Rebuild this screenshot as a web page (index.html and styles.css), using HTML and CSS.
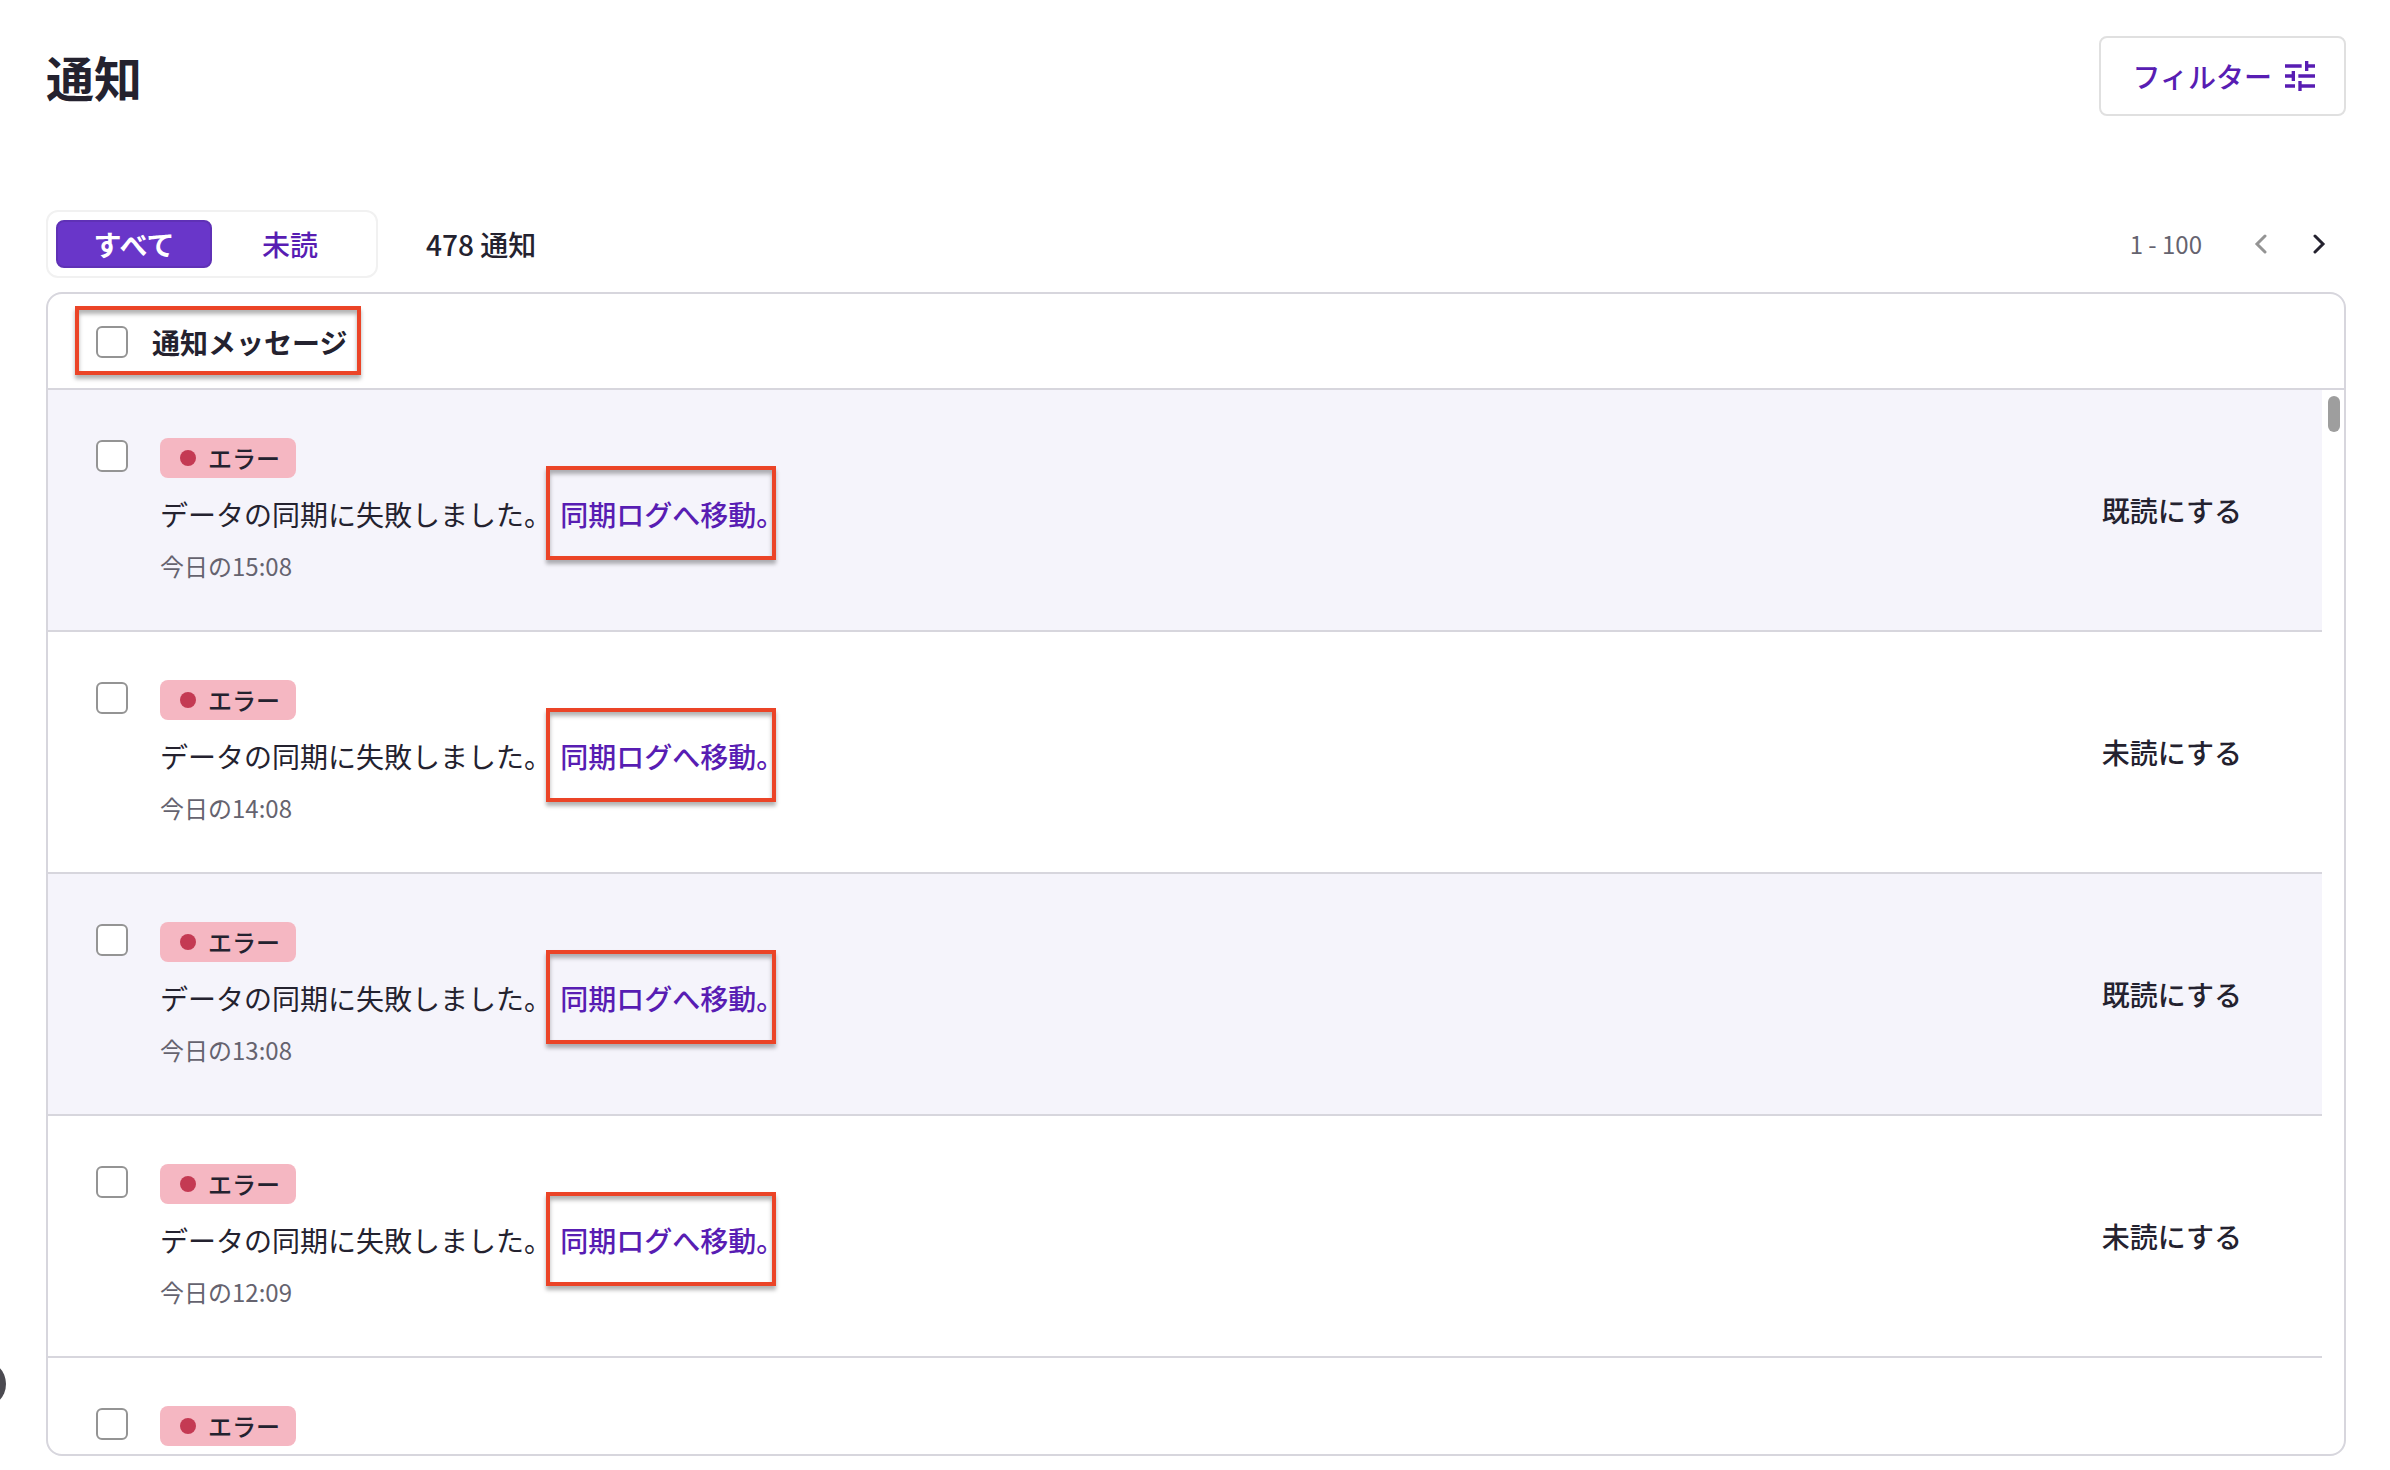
FILE: index.html
```
<!DOCTYPE html>
<html lang="ja">
<head>
  <meta charset="UTF-8">
  <meta name="viewport" content="width=device-width, initial-scale=1">
  <title>通知</title>
  <link rel="stylesheet" href="styles.css">
</head>
<body>

  <main class="page">
    <header class="page-header">
      <h1>通知</h1>
      <button type="button" class="filter-button">
        フィルター
        <svg viewBox="0 0 24 24" width="40" height="40" aria-hidden="true">
          <path fill="currentColor" d="M3 17v2h6v-2H3zM3 5v2h10V5H3zm10 16v-2h8v-2h-8v-2h-2v6h2zM7 9v2H3v2h4v2h2V9H7zm14 4v-2H11v2h10zm-6-4h2V7h4V5h-4V3h-2v6z"/>
        </svg>
      </button>
    </header>

    <div class="toolbar">
      <div class="segment">
        <button type="button" class="segment-button active">すべて</button>
        <button type="button" class="segment-button">未読</button>
      </div>
      <span class="count">478 通知</span>
      <div class="pager">
        <span class="range">1 - 100</span>
        <button type="button" class="pager-button" aria-label="前へ" disabled>
          <svg viewBox="0 0 20 20" width="20" height="20"><path d="M14 2 6 10l8 8"/></svg>
        </button>
        <button type="button" class="pager-button" aria-label="次へ">
          <svg viewBox="0 0 20 20" width="20" height="20"><path d="m6 2 8 8-8 8"/></svg>
        </button>
      </div>
    </div>

    <section class="card">
      <div class="card-header">
        <label class="select-all">
          <input type="checkbox" class="checkbox">
          通知メッセージ
        </label>
      </div>

      <div class="card-body">
        <ul class="list">
          <li class="row unread">
            <input type="checkbox" class="checkbox" aria-label="選択">
            <div class="content">
              <span class="badge">エラー</span>
              <p class="message">データの同期に失敗しました。 <a href="#" class="log-link">同期ログへ移動。</a></p>
              <time class="time">今日の15:08</time>
            </div>
            <button type="button" class="action">既読にする</button>
          </li>
          <li class="row">
            <input type="checkbox" class="checkbox" aria-label="選択">
            <div class="content">
              <span class="badge">エラー</span>
              <p class="message">データの同期に失敗しました。 <a href="#" class="log-link">同期ログへ移動。</a></p>
              <time class="time">今日の14:08</time>
            </div>
            <button type="button" class="action">未読にする</button>
          </li>
          <li class="row unread">
            <input type="checkbox" class="checkbox" aria-label="選択">
            <div class="content">
              <span class="badge">エラー</span>
              <p class="message">データの同期に失敗しました。 <a href="#" class="log-link">同期ログへ移動。</a></p>
              <time class="time">今日の13:08</time>
            </div>
            <button type="button" class="action">既読にする</button>
          </li>
          <li class="row">
            <input type="checkbox" class="checkbox" aria-label="選択">
            <div class="content">
              <span class="badge">エラー</span>
              <p class="message">データの同期に失敗しました。 <a href="#" class="log-link">同期ログへ移動。</a></p>
              <time class="time">今日の12:09</time>
            </div>
            <button type="button" class="action">未読にする</button>
          </li>
          <li class="row">
            <input type="checkbox" class="checkbox" aria-label="選択">
            <div class="content">
              <span class="badge">エラー</span>
            </div>
          </li>
        </ul>
        <div class="scrollbar"><div class="scrollbar-thumb"></div></div>
      </div>
    </section>
  </main>

  <button type="button" class="launcher" aria-label="ヘルプ"></button>

</body>
</html>
```
FILE: styles.css
```
* {
  box-sizing: border-box;
  margin: 0;
  padding: 0;
}

body {
  font-family: "Noto Sans CJK JP", "Noto Sans", sans-serif;
  font-size: 28px;
  line-height: 40px;
  color: #24222f;
  background-color: #fff;
}

button {
  font: inherit;
  font-weight: 500;
  color: inherit;
  background: none;
  border: none;
  cursor: pointer;
}

.page {
  display: flex;
  flex-direction: column;
  height: 100vh;
  padding: 36px 44px 14px 46px;
}

/* Header */
.page-header {
  display: flex;
  justify-content: space-between;
  align-items: center;
  height: 80px;
}

h1 {
  font-size: 48px;
  line-height: 72px;
}

.filter-button {
  display: flex;
  align-items: center;
  gap: 8px;
  height: 80px;
  padding: 0 24px 0 32px;
  border: 2px solid #e0e0e0;
  border-radius: 8px;
  color: #581db3;
}

/* Toolbar */
.toolbar {
  display: flex;
  align-items: center;
  margin: 94px 0 14px;
}

.segment {
  display: flex;
  padding: 8px;
  border: 2px solid #f1f1f1;
  border-radius: 12px;
}

.segment-button {
  width: 156px;
  height: 48px;
  border-radius: 8px;
  color: #581db3;
}

.segment-button.active {
  border: 2px solid #5f31b6;
  background-color: #6936c9;
  color: #fff;
  font-weight: bold;
  line-height: 44px;
}

.count {
  margin-left: 48px;
  font-weight: 500;
}

.pager {
  display: flex;
  align-items: center;
  gap: 4px;
  margin-left: auto;
}

.range {
  margin-right: 28px;
  font-size: 24px;
  color: #65636f;
}

.pager-button {
  display: flex;
  align-items: center;
  justify-content: center;
  width: 54px;
  height: 40px;
}

.pager-button svg {
  fill: none;
  stroke: currentColor;
  stroke-width: 3;
  stroke-linecap: round;
}

.pager-button:disabled {
  color: #949494;
}

/* Card */
.card {
  display: flex;
  flex-direction: column;
  flex: 1;
  min-height: 0;
  border: 2px solid #d7d6dd;
  border-radius: 16px;
  overflow: hidden;
}

.card-header {
  height: 96px;
  padding: 12px 27px;
  border-bottom: 2px solid #d7d6dd;
}

.select-all {
  display: inline-flex;
  align-items: center;
  gap: 24px;
  height: 69px;
  padding: 2px 10px 0 17px;
  border: 4px solid #eb4427;
  box-shadow: 0 4px 4px rgba(0, 0, 0, 0.3), inset 0 4px 4px rgba(0, 0, 0, 0.3);
  font-weight: bold;
}

.checkbox {
  appearance: none;
  flex: none;
  width: 32px;
  height: 32px;
  border: 2px solid #949494;
  border-radius: 6px;
  background-color: #fff;
}

.card-body {
  display: flex;
  flex: 1;
  min-height: 0;
}

.list {
  flex: 1;
  list-style: none;
  overflow-y: auto;
  scrollbar-width: none;
}

.row {
  display: flex;
  align-items: flex-start;
  gap: 32px;
  height: 242px;
  padding: 48px 80px 0 48px;
  border-bottom: 2px solid #d7d6dd;
}

.row.unread {
  background-color: #f5f4fb;
}

.row .checkbox {
  margin-top: 2px;
}

.content {
  flex: 1;
}

.badge {
  display: inline-flex;
  align-items: center;
  gap: 12px;
  height: 40px;
  padding: 0 16px 0 20px;
  border-radius: 8px;
  background-color: #f5b7c2;
  font-size: 24px;
  font-weight: 500;
  vertical-align: top;
}

.badge::before {
  content: "";
  width: 16px;
  height: 16px;
  border-radius: 50%;
  background-color: #c43a53;
}

.message {
  margin-top: 16px;
}

.log-link {
  position: relative;
  margin-left: 2px;
  color: #581db3;
  font-weight: 500;
  text-decoration: none;
}

/* red frame over the link */
.log-link::after {
  content: "";
  position: absolute;
  top: -28px;
  bottom: -26px;
  left: -14px;
  right: 8px;
  border: 4px solid #eb4427;
  box-shadow: 0 4px 4px rgba(0, 0, 0, 0.3), inset 0 4px 4px rgba(0, 0, 0, 0.3);
}

.time {
  display: block;
  margin-top: 12px;
  font-size: 24px;
  color: #65636f;
}

.action {
  height: 144px;
}

.scrollbar {
  width: 22px;
  padding: 6px;
}

.scrollbar-thumb {
  width: 12px;
  height: 36px;
  border-radius: 6px;
  background-color: #9e9e9e;
}

.launcher {
  position: fixed;
  left: -42px;
  bottom: 62px;
  width: 48px;
  height: 48px;
  border-radius: 50%;
  background-color: #4b4a50;
}
```
